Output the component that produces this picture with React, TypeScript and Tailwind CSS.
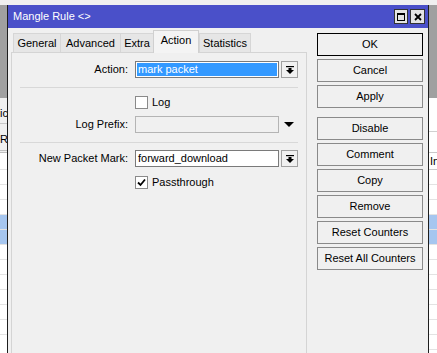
import React from "react";

const DropGlyph = () => (
  <svg width="8" height="8" viewBox="0 0 8 8">
    <rect x="0" y="0" width="8" height="1.2" fill="#000" />
    <rect x="2.5" y="2" width="3" height="2" fill="#000" />
    <polygon points="0,4 8,4 4,8" fill="#000" />
  </svg>
);

const DropButton = () => (
  <div className="w-[17px] h-[17px] border border-[#a0a0a0] bg-[#f0f0f0] flex items-center justify-center">
    <DropGlyph />
  </div>
);

const CheckBox = ({ checked }: { checked?: boolean }) => (
  <div className="w-[13px] h-[13px] border border-[#8a8a8a] bg-white flex items-center justify-center">
    {checked && (
      <svg width="9" height="9" viewBox="0 0 9 9">
        <path d="M1 4.5 L3.5 7 L8 1.5" stroke="#000" strokeWidth="1.8" fill="none" />
      </svg>
    )}
  </div>
);

const Label = ({ children }: { children: React.ReactNode }) => (
  <div className="w-[117px] text-right pr-[1px]">{children}</div>
);

function LeftStrip() {
  const rows = Array.from({ length: 12 });
  return (
    <div className="w-[7px] flex flex-col overflow-hidden">
      <div className="h-[93px] bg-[#a0a0a0]" />
      <div className="h-[25px] bg-[#f0f0f0] pt-[10px] whitespace-nowrap leading-none">ic</div>
      <div className="h-[27px] bg-[#f0f0f0] border-t border-[#c8c8c8] pt-[10px] whitespace-nowrap leading-none">Re</div>
      <div className="h-[3px] border-y border-[#c0c0c0]" />
      <div className="flex-1 bg-white flex flex-col pt-[2px]">
        {rows.map((_, i) => (
          <div
            key={i}
            className={`h-[15px] shrink-0 border-b border-[#e3e3e3] ${i === 4 || i === 5 ? "bg-[#a6c6ef]" : ""}`}
          />
        ))}
      </div>
    </div>
  );
}

function RightStrip() {
  const rows = Array.from({ length: 12 });
  return (
    <div className="w-[8px] flex flex-col overflow-hidden">
      <div className="h-[93px] bg-[#a0a0a0]" />
      <div className="h-[34px] bg-white border-b border-[#d0d0d0]" />
      <div className="h-[20px] bg-white" />
      <div className="h-[18px] bg-white border-y border-[#c8c8c8] flex items-center whitespace-nowrap leading-none pl-[1px]">In</div>
      <div className="flex-1 bg-white flex flex-col">
        {rows.map((_, i) => (
          <div
            key={i}
            className={`h-[15px] shrink-0 border-b border-[#e3e3e3] ${i === 3 || i === 4 ? "bg-[#a6c6ef]" : ""}`}
          />
        ))}
      </div>
    </div>
  );
}

export default function App() {
  const tabs = [
    { name: "General", w: "w-[48px]" },
    { name: "Advanced", w: "w-[61px]" },
    { name: "Extra", w: "w-[34px]" },
    { name: "Action", w: "w-[46px]", active: true },
    { name: "Statistics", w: "w-[52px]" },
  ];
  const buttons = ["OK", "Cancel", "Apply", "Disable", "Comment", "Copy", "Remove", "Reset Counters", "Reset All Counters"];

  return (
    <div className="w-[437px] h-[353px] overflow-hidden bg-[#f0f0f0] text-[11px] text-black font-['Liberation_Sans',Arial,sans-serif] flex flex-col">
      <div className="h-[5px] shrink-0 bg-[#f0f0f0]" />
      <div className="flex flex-1 min-h-0">
        <LeftStrip />
        <div className="w-[422px] border-x border-[#1e1e1e] bg-[#f0f0f0] flex flex-col">
          {/* title bar */}
          <div className="h-[23px] shrink-0 bg-[#4a50c9] flex items-center pl-[5px] pr-[3px]">
            <span className="text-white text-[11px] flex-1">Mangle Rule &lt;&gt;</span>
            <div className="flex gap-[2px]">
              <div className="w-[14px] h-[15px] bg-[#e4e4e4] border border-[#333] flex items-center justify-center">
                <div className="w-[8px] h-[8px] border border-black border-t-2" />
              </div>
              <div className="w-[15px] h-[15px] bg-[#e4e4e4] border border-[#333] flex items-center justify-center">
                <svg width="8" height="8" viewBox="0 0 8 8">
                  <path d="M1 1 L7 7 M7 1 L1 7" stroke="#000" strokeWidth="1.8" />
                </svg>
              </div>
            </div>
          </div>

          <div className="flex flex-1 min-h-0 pl-[3px]">
            {/* left: tabs + panel */}
            <div className="w-[296px] flex flex-col">
              <div className="h-[24px] shrink-0 flex items-end pl-[2px] pt-[2px]">
                {tabs.map((t) =>
                  t.active ? (
                    <div
                      key={t.name}
                      className={`${t.w} h-[23px] -mb-[1px] relative z-10 bg-[#f4f4f4] border border-b-0 border-[#d0d0d0] flex items-center justify-center pb-[3px]`}
                    >
                      {t.name}
                    </div>
                  ) : (
                    <div
                      key={t.name}
                      className={`${t.w} h-[19px] bg-[#e6e6e6] border border-b-0 border-[#d6d6d6] -mr-[1px] flex items-center justify-center`}
                    >
                      {t.name}
                    </div>
                  )
                )}
              </div>
              <div className="flex-1 bg-[#f0f0f0] border-t border-l border-r border-[#d4d4d4] flex flex-col">
                {/* Action */}
                <div className="flex items-center h-[17px] mt-[8px]">
                  <Label>Action:</Label>
                  <div className="ml-[6px] w-[144px] h-[17px] border border-[#7a7a7a] bg-white p-[1px]">
                    <div className="h-full bg-[#3399ff] text-white flex items-center pl-[1px] leading-none">mark packet</div>
                  </div>
                  <div className="ml-[2px]">
                    <DropButton />
                  </div>
                </div>
                <div className="ml-[8px] w-[278px] border-t border-[#d8d8d8] mt-[9px]" />
                {/* Log */}
                <div className="flex items-center h-[13px] mt-[8px]">
                  <div className="w-[123px]" />
                  <CheckBox />
                  <span className="ml-[4px]">Log</span>
                </div>
                {/* Log Prefix */}
                <div className="flex items-center h-[17px] mt-[7px]">
                  <Label>Log Prefix:</Label>
                  <div className="ml-[6px] w-[144px] h-[17px] border border-[#b4b4b4] bg-[#f0f0f0]" />
                  <div className="ml-[5px] w-0 h-0 border-x-[5px] border-x-transparent border-t-[5px] border-t-black" />
                </div>
                <div className="ml-[8px] w-[278px] border-t border-[#d8d8d8] mt-[9px]" />
                {/* New Packet Mark */}
                <div className="flex items-center h-[17px] mt-[7px]">
                  <Label>New Packet Mark:</Label>
                  <div className="ml-[6px] w-[144px] h-[17px] border border-[#7a7a7a] bg-white flex items-center pl-[2px] leading-none">
                    forward_download
                  </div>
                  <div className="ml-[2px]">
                    <DropButton />
                  </div>
                </div>
                {/* Passthrough */}
                <div className="flex items-center h-[13px] mt-[9px]">
                  <div className="w-[123px]" />
                  <CheckBox checked />
                  <span className="ml-[4px]">Passthrough</span>
                </div>
              </div>
            </div>

            {/* right: buttons */}
            <div className="ml-[10px] w-[106px] flex flex-col pt-[5px]">
              {buttons.map((b, i) => (
                <div
                  key={b}
                  className={`h-[23px] shrink-0 flex items-center justify-center bg-[#f0f0f0] border ${
                    i === 0 ? "border-black" : "border-[#8a8a8a]"
                  } ${i === 0 ? "" : i === 3 ? "mt-[9px]" : "mt-[3px]"}`}
                >
                  {b}
                </div>
              ))}
            </div>
          </div>
        </div>
        <RightStrip />
      </div>
    </div>
  );
}
